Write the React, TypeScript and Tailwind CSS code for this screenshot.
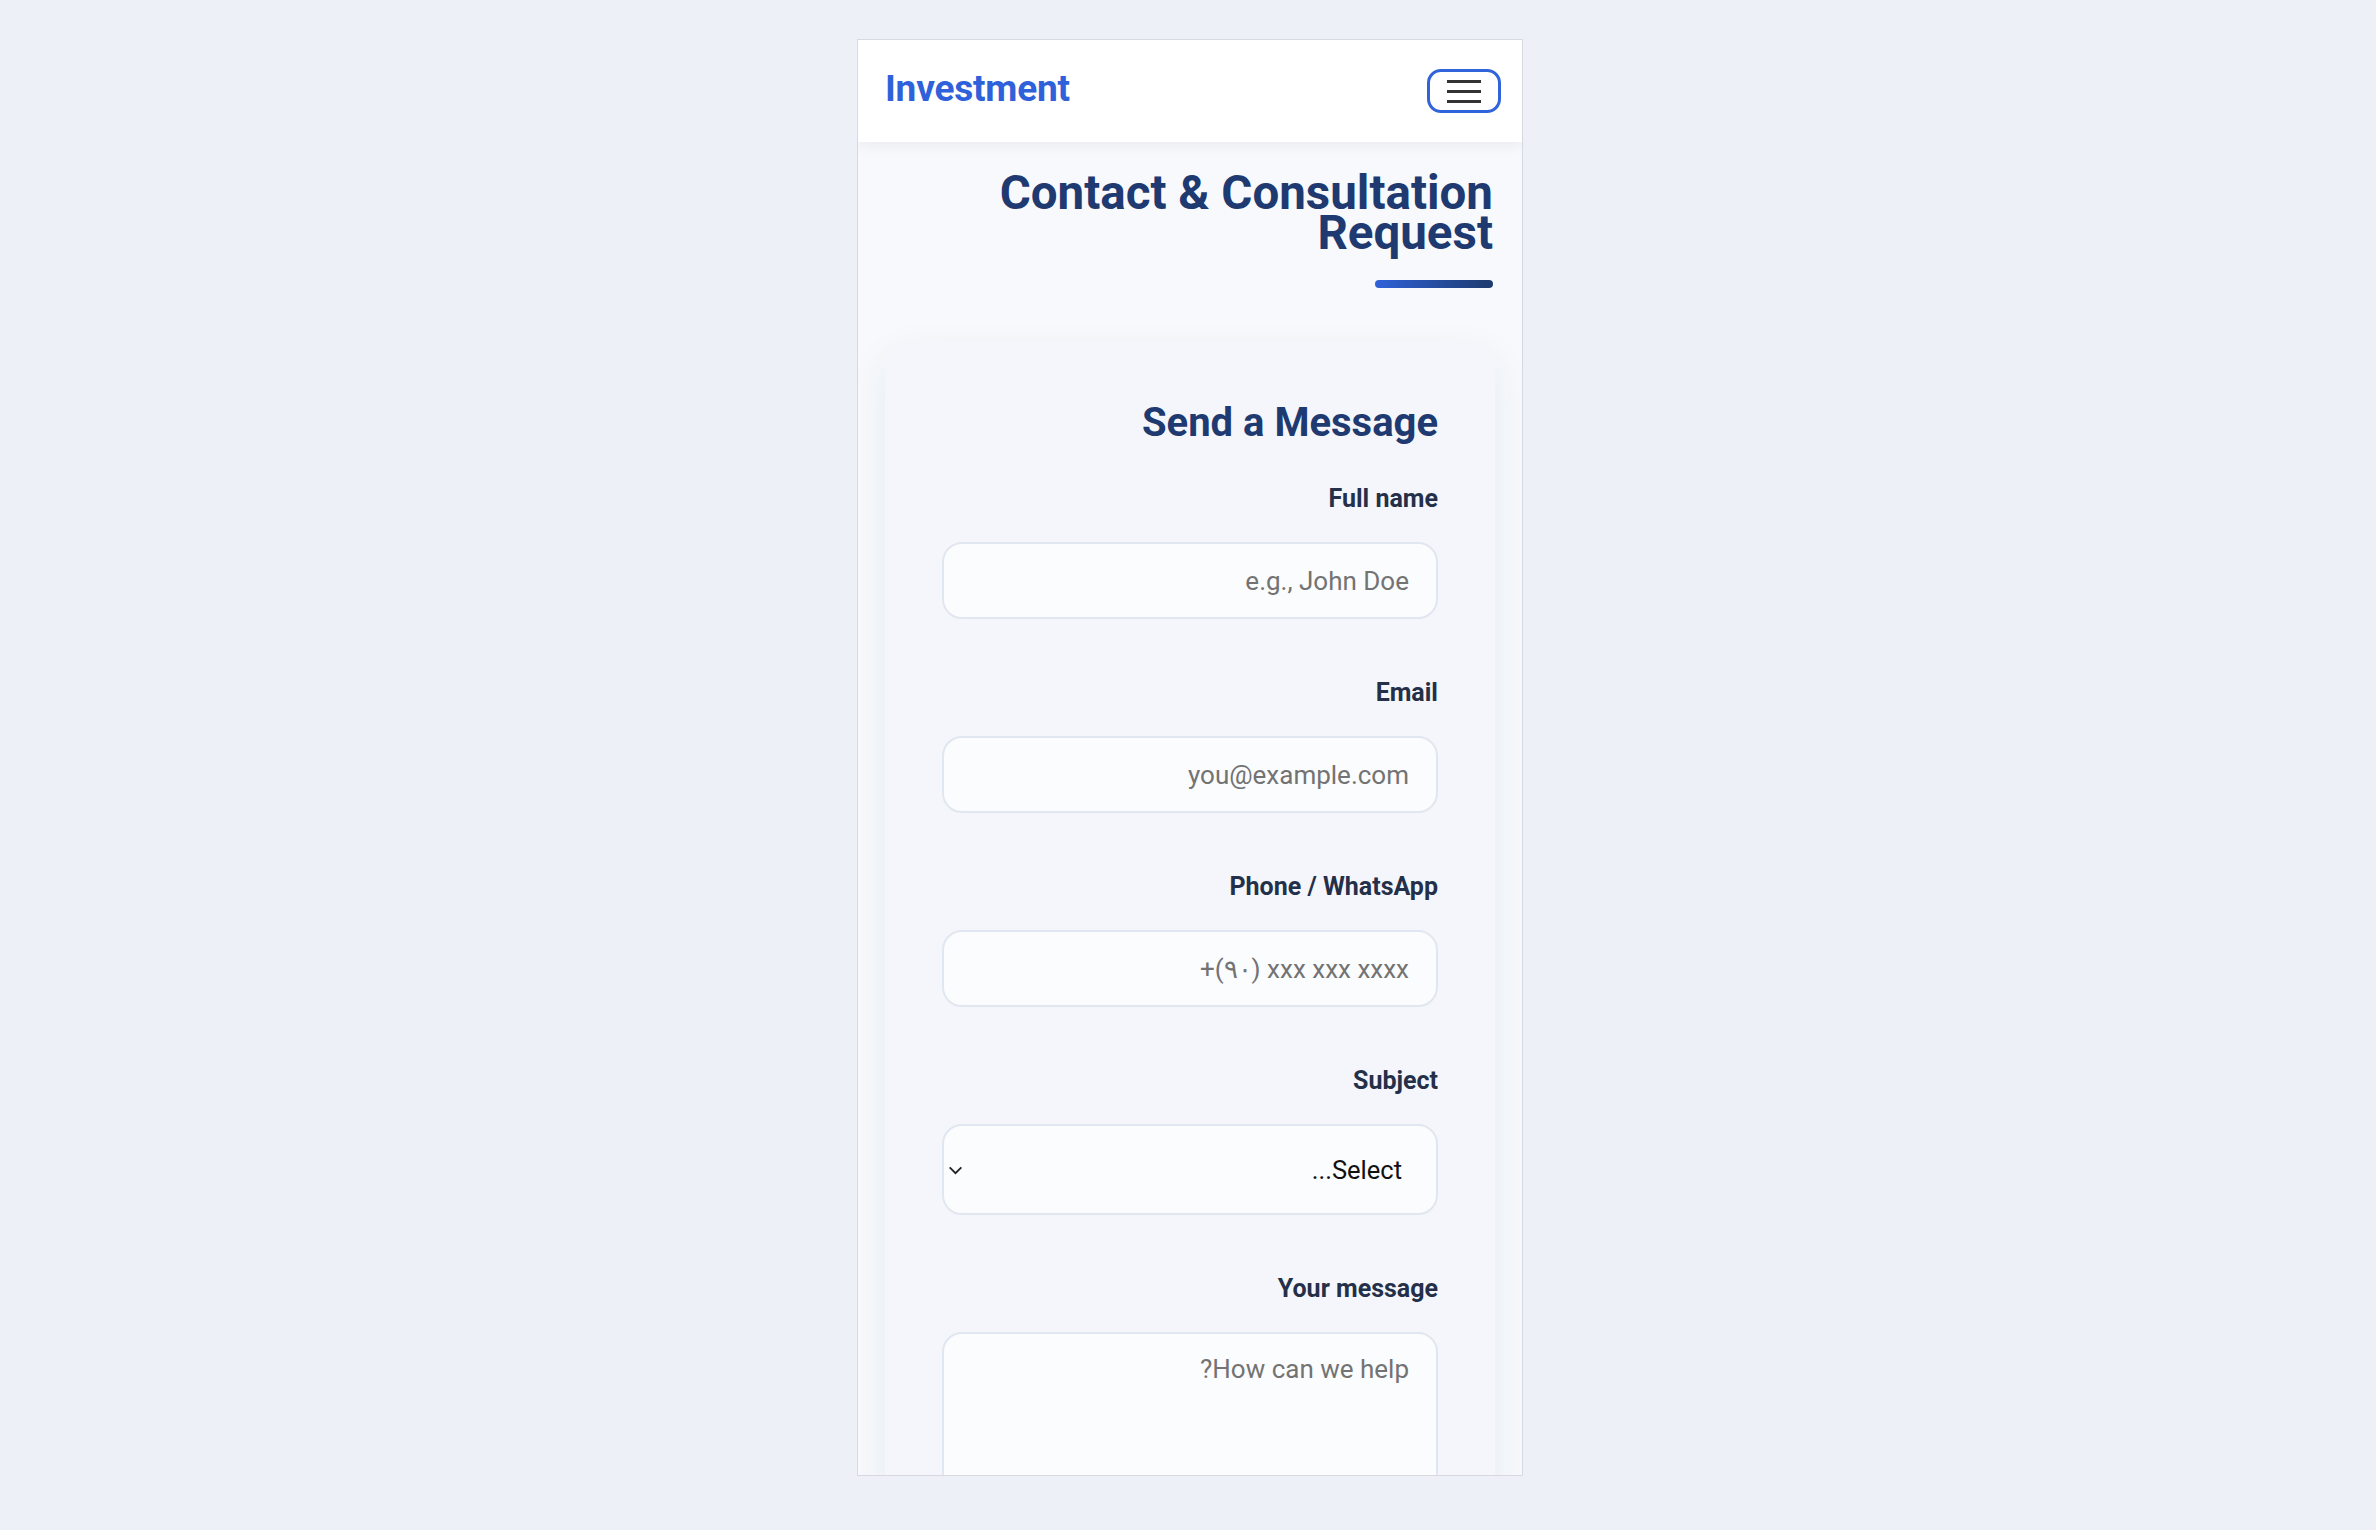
import { useState } from 'react'

const fields = [
  { label: 'Full name', placeholder: 'e.g., John Doe', type: 'text' },
  { label: 'Email', placeholder: 'you@example.com', type: 'email' },
  { label: 'Phone / WhatsApp', placeholder: '+(٩٠) xxx xxx xxxx', type: 'tel', ltr: true },
]

export default function App() {
  const [open, setOpen] = useState(false)

  return (
    <div className="min-h-screen bg-[#edf1f7] pl-[4px] pt-[39px] font-['Roboto','Liberation_Sans',sans-serif]">
      <div className="mx-auto flex h-[1437px] w-[666px] flex-col overflow-hidden border border-[#d6dae0] bg-[#f7f9fc]">
        {/* top bar */}
        <header className="relative z-10 flex h-[102px] shrink-0 items-center justify-between bg-white pl-[27px] pr-[21px] shadow-[0_4px_14px_rgba(15,23,42,0.06)]">
          <span className="mb-[6px] text-[37px] font-bold leading-none tracking-[-0.2px] text-[#2f62da]">Investment</span>
          <button
            onClick={() => setOpen(!open)}
            className="flex h-[44px] w-[74px] flex-col items-center justify-center gap-[7px] rounded-[14px] border-[3px] border-[#3163da] bg-white"
          >
            <span className="block h-[3px] w-[34px] bg-[#333]" />
            <span className="block h-[3px] w-[34px] bg-[#333]" />
            <span className="block h-[3px] w-[34px] bg-[#333]" />
          </button>
        </header>

        <main dir="rtl" className="px-[27px] pt-[31px]">
          <div className="flex flex-col items-start pl-[2px] pr-[2px]">
            <h1 className="text-[47.5px] font-bold leading-[40px] text-[#1e3a70]">
              Contact &amp; Consultation Request
            </h1>
            <div className="mt-[27px] h-[8px] w-[118px] rounded-full bg-gradient-to-r from-[#2f62da] to-[#1e3a6e]" />
          </div>

          <section className="mt-[55px] rounded-[24px] bg-[#f4f6fb] px-[57px] pb-[60px] pt-[58px] shadow-[0_12px_40px_rgba(30,58,110,0.07)]">
            <h2 className="mb-[36px] text-[40px] font-bold leading-[44px] text-[#1e3a70]">Send a Message</h2>

            {fields.map((f) => (
              <div key={f.label} className="mb-[56px]">
                <label className="mb-[25px] block text-[25px] font-bold leading-[36px] text-[#243049]">{f.label}</label>
                <input
                  type={f.type}
                  dir={f.ltr ? 'ltr' : 'rtl'}
                  placeholder={f.placeholder}
                  className="block h-[77px] w-full rounded-[20px] border-2 border-[#e1e7f0] bg-[#fbfcfe] px-[27px] text-right text-[26px] leading-[36px] text-[#1f2937] outline-none placeholder:text-[#737373]"
                />
              </div>
            ))}

            <div className="mb-[56px]">
              <label className="mb-[25px] block text-[25px] font-bold leading-[36px] text-[#243049]">Subject</label>
              <div className="relative">
                <select className="block h-[91px] w-full appearance-none rounded-[20px] border-2 border-[#e1e7f0] bg-[#fbfcfe] pl-[40px] pr-[34px] text-[25.5px] leading-[36px] text-[#111] outline-none">
                  <option>Select...</option>
                  <option>Investment consultation</option>
                  <option>Partnership</option>
                  <option>Other</option>
                </select>
                <svg
                  viewBox="0 0 16 10"
                  className="pointer-events-none absolute left-[6px] top-[42px] h-[9px] w-[15px]"
                  fill="none"
                  stroke="#222"
                  strokeWidth="2"
                >
                  <path d="M1.5 1.5 8 8l6.5-6.5" />
                </svg>
              </div>
            </div>

            <div>
              <label className="mb-[25px] block text-[25px] font-bold leading-[36px] text-[#243049]">Your message</label>
              <textarea
                placeholder="How can we help?"
                className="block h-[220px] w-full resize-none rounded-[20px] border-2 border-[#e1e7f0] bg-[#fbfcfe] px-[27px] py-[17px] text-[26px] leading-[36px] text-[#1f2937] outline-none placeholder:text-[#737373]"
              />
            </div>
          </section>
        </main>
      </div>
    </div>
  )
}
